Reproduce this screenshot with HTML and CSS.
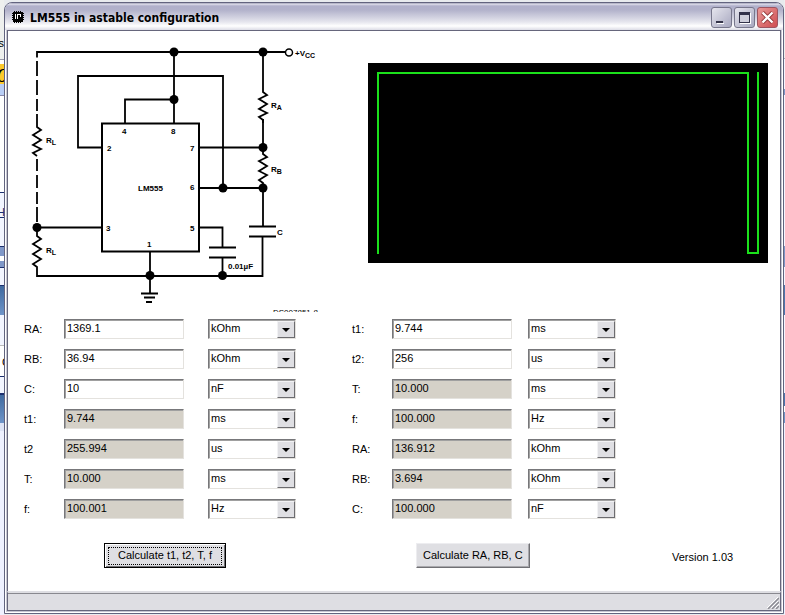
FILE: index.html
```
<!DOCTYPE html>
<html lang="en">
<head>
<meta charset="utf-8">
<title>LM555 in astable configuration</title>
<link rel="stylesheet" href="styles.css">
</head>
<body>
<div class="edge edge-left" aria-hidden="true"><span class="edge-ks">ks</span><span class="edge-logo">O</span><span class="edge-h">H</span><span class="edge-c">C</span></div>
<section class="window">
  <header class="titlebar">
    <svg class="app-icon" width="12" height="12" viewBox="0 0 12 12" shape-rendering="crispEdges" aria-hidden="true">
      <path d="M1 1h10v10H1z"/><path d="M0 2h1v1H0zM0 4h1v1H0zM0 6h1v1H0zM0 8h1v1H0zM11 2h1v1h-1zM11 4h1v1h-1zM11 6h1v1h-1zM11 8h1v1h-1zM2 0h1v1H2zM4 0h1v1H4zM6 0h1v1H6zM8 0h1v1H8zM2 11h1v1H2zM4 11h1v1H4zM6 11h1v1H6zM8 11h1v1H8z"/>
      <path d="M3 3h1v5H3zM5 3h4v1H5zM5 4h1v4H5zM8 4h1v2H8z" fill="#fff"/>
    </svg>
    <h1 class="title">LM555 in astable configuration</h1>
    <div class="controls">
      <button class="ctl" type="button" aria-label="Minimize"><svg width="19" height="19" viewBox="0 0 19 19"><path d="M4 13h7v2H4z" fill="#333348"/><path d="M5 15h7v1H5z" fill="#fff"/></svg></button>
      <button class="ctl" type="button" aria-label="Maximize"><svg width="19" height="19" viewBox="0 0 19 19" shape-rendering="crispEdges"><path d="M5 5h11v11H5z" fill="#fff"/><path d="M4 4h11v11H4z" fill="#33334a"/><path d="M5 7h9v7H5z" fill="#d0d0dc"/></svg></button>
      <button class="ctl ctl-close" type="button" aria-label="Close"><svg width="19" height="19" viewBox="0 0 19 19"><path d="M4.500 4.500l10 10M14.500 4.500l-10 10" stroke="#8e3434" stroke-width="4"/><path d="M4.500 4.500l10 10M14.500 4.500l-10 10" stroke="#fff" stroke-width="2.400"/></svg></button>
    </div>
  </header>
  <main class="client">
    <div class="figures">
      <svg class="circuit" width="296" height="273" viewBox="24 39 296 273" role="img" aria-label="LM555 astable circuit">
        <g class="wire">
          <path d="M37 57.500V52H285M174 52v71M125 123V99.500h49M102 147.500H78V76h145v112M199 147.500h64M199 188h64M37 227.500h65M37 270v6h225.500v-40M263 52v38M263 119v32M263 188v38M199 227.500h23.500V247M222.500 258v18"/>
          <path d="M37 61v15M37 80v15M37 99v12M37 114v10M37 159v12M37 175v13M37 192v12M37 207v15M37 227v6"/>
          <path d="M37 124v3l4 3-8 5 8 5-8 5 8 4-8 4 4 3"/>
          <path d="M37 233v3l4 3-8 5 8 5-8 5 8 5-8 5 4 3v3"/>
          <path d="M263 90v2l4 3-8 4 8 5-8 5 8 4-8 4 4 3v3"/>
          <path d="M263 150v4l4 3-8 4 8 5-8 5 8 4-8 5 4 3v5"/>
          <path d="M249 226.500h27M249 236.500h27M209 247.500h27M209 257.500h27"/>
          <path d="M150 251v42M141 293.500h17M144 297.500h11M146 302h6"/>
          <path class="chip" d="M102 123.500h97V251.500h-97z"/>
        </g>
        <g><circle cx="174" cy="52" r="4.500"/><circle cx="174" cy="99.500" r="4.500"/><circle cx="263" cy="52" r="4.500"/><circle cx="263" cy="147.500" r="4.500"/><circle cx="263" cy="188" r="4.500"/><circle cx="223" cy="188" r="4.500"/><circle cx="37" cy="227.500" r="4.500"/><circle cx="150" cy="275.500" r="4.500"/><circle cx="222.500" cy="275.500" r="4.500"/></g>
        <circle class="terminal" cx="289" cy="52.500" r="3.500"/>
        <g class="legend">
          <text x="295" y="56">+V<tspan class="sub" dy="2">CC</tspan></text>
          <text x="271" y="108">R<tspan class="sub" dy="2">A</tspan></text>
          <text x="271" y="172">R<tspan class="sub" dy="2">B</tspan></text>
          <text x="46" y="143">R<tspan class="sub" dy="2">L</tspan></text>
          <text x="46" y="253">R<tspan class="sub" dy="2">L</tspan></text>
          <text x="277" y="235">C</text><text x="228" y="269">0.01µF</text>
          <text x="138" y="191">LM555</text>
          <text x="122" y="134">4</text><text x="171" y="134">8</text><text x="107" y="151">2</text><text x="190" y="151">7</text><text x="190" y="190">6</text><text x="190" y="231">5</text><text x="106" y="231">3</text><text x="147" y="247">1</text>
          <text class="part" x="273" y="315">DS007851-8</text>
        </g>
      </svg>
      <svg class="scope" width="400" height="200" viewBox="0 0 400 200" role="img" aria-label="Output waveform"><path d="M10 191V10H380V190H390V9" fill="none" stroke="#1be01b" stroke-width="2" shape-rendering="crispEdges"/></svg>
    </div>
    <form class="forms">
      <div class="panel">
        <div class="row"><label for="a1">RA:</label><input id="a1" value="1369.1"><span class="pick"><select aria-label="RA unit"><option>kOhm</option></select></span></div>
        <div class="row"><label for="a2">RB:</label><input id="a2" value="36.94"><span class="pick"><select aria-label="RB unit"><option>kOhm</option></select></span></div>
        <div class="row"><label for="a3">C:</label><input id="a3" value="10"><span class="pick"><select aria-label="C unit"><option>nF</option></select></span></div>
        <div class="row"><label for="a4">t1:</label><input id="a4" value="9.744" readonly><span class="pick"><select aria-label="t1 unit"><option>ms</option></select></span></div>
        <div class="row"><label for="a5">t2</label><input id="a5" value="255.994" readonly><span class="pick"><select aria-label="t2 unit"><option>us</option></select></span></div>
        <div class="row"><label for="a6">T:</label><input id="a6" value="10.000" readonly><span class="pick"><select aria-label="T unit"><option>ms</option></select></span></div>
        <div class="row"><label for="a7">f:</label><input id="a7" value="100.001" readonly><span class="pick"><select aria-label="f unit"><option>Hz</option></select></span></div>
        <div class="action action-main"><button class="btn btn-default" type="button"><span>Calculate t1, t2, T, f</span></button></div>
      </div>
      <div class="panel panel-right">
        <div class="row"><label for="b1">t1:</label><input id="b1" value="9.744"><span class="pick"><select aria-label="t1 unit"><option>ms</option></select></span></div>
        <div class="row"><label for="b2">t2:</label><input id="b2" value="256"><span class="pick"><select aria-label="t2 unit"><option>us</option></select></span></div>
        <div class="row"><label for="b3">T:</label><input id="b3" value="10.000" readonly><span class="pick"><select aria-label="T unit"><option>ms</option></select></span></div>
        <div class="row"><label for="b4">f:</label><input id="b4" value="100.000" readonly><span class="pick"><select aria-label="f unit"><option>Hz</option></select></span></div>
        <div class="row"><label for="b5">RA:</label><input id="b5" value="136.912" readonly><span class="pick"><select aria-label="RA unit"><option>kOhm</option></select></span></div>
        <div class="row"><label for="b6">RB:</label><input id="b6" value="3.694" readonly><span class="pick"><select aria-label="RB unit"><option>kOhm</option></select></span></div>
        <div class="row"><label for="b7">C:</label><input id="b7" value="100.000" readonly><span class="pick"><select aria-label="C unit"><option>nF</option></select></span></div>
        <div class="action"><button class="btn" type="button"><span>Calculate RA, RB, C</span></button></div>
      </div>
      <p class="version">Version 1.03</p>
    </form>
  </main>
  <footer class="status"><svg width="12" height="12" viewBox="0 0 12 12" aria-hidden="true"><path d="M1 12L12 1M5 12l7-7M9 12l3-3" stroke="#8c8c94" stroke-width="1.500"/><path d="M0 11L11 0M4 11l7-7M8 11l4-4" stroke="#fff"/></svg></footer>
</section>
<div class="edge edge-right" aria-hidden="true"></div>
</body>
</html>
```
FILE: styles.css
```
* { box-sizing: border-box; }

body {
  margin: 0;
  min-height: 100vh;
  display: grid;
  grid-template-columns: 4px minmax(0, 1fr) 1px;
  padding: 2px 0 1px;
  background: #e8ebee;
  color: #000;
  font: 11px/13px "Liberation Sans", Arial, sans-serif;
}

.edge {
  margin: -2px 0 -1px;
  position: relative;
  overflow: hidden;
  background: linear-gradient(#eef0ee 59px, #99a 59px 60px, #fff 60px 64px, #fdc92b 64px 84px, #b8cdf5 84px 95px, #88a 95px 96px, #fff 96px 192px, #1c2f6e 192px 193px, #f2f5ff 193px 217px, #1c2f6e 217px 218px, #f2f5ff 218px 246px, #1c2f6e 246px 247px, #7f97c8 247px 256px, #fff 256px 261px, #7f97c8 261px 267px, #1c2f6e 267px 268px, #f2f5ff 268px 285px, #1c2f6e 285px 286px, #3f699f 286px, #6f94c8 315px, #f2f5ff 315px 345px, #bbb 345px 346px, #fff 346px 376px, #1c2f6e 376px 377px, #f2f5ff 377px 393px, #1c2f6e 393px 395px, #3f699f 395px, #6f94c8 423px, #dde3f5 423px 431px, #eef1ff 431px);
}
.edge-right { background: linear-gradient(#eef0ee 58px, #aab 58px 59px, #f5f5ff 59px 89px, #7f97c8 89px 95px, #f5f5ff 95px 246px, #7f97c8 246px 267px, #f5f5ff 267px 285px, #4d77b0 285px 315px, #f5f5ff 315px 393px, #4d77b0 393px 406px, #fff 406px 412px, #6f94c8 412px 423px, #eef1ff 423px); }
.edge span { position: absolute; right: 0; }
.edge .edge-ks { top: 37px; }
.edge .edge-logo { top: 67px; right: -5px; font: italic bold 18px/18px "Liberation Serif", serif; }
.edge .edge-h { top: 206px; right: -1px; color: #1c2f6e; }
.edge .edge-c { top: 356px; right: -6px; }

.window {
  display: flex;
  flex-direction: column;
  padding: 0 2px 2px;
  border: 1px solid #62647f;
  border-radius: 8px 8px 0 0;
  background: #fff;
  box-shadow: inset 0 0 0 1px #fff, inset 0 0 0 2px #c6c6d2;
}

.titlebar {
  display: flex;
  align-items: center;
  height: 27px;
  margin: 0 -2px;
  padding: 0 5px 0 7px;
  border-radius: 7px 7px 0 0;
  background: linear-gradient(#8f90a8 0, #e0e0ec 1px, #b0b0cb 3px, #b2b2cb 7px, #d0d0df 14px, #e6e6ee 19px, #fff 23px, #dcdce6 27px);
}
.app-icon { flex: none; margin-right: 6px; }
.title { flex: 1; margin: 0; padding-top: 3px; font: bold 12px/16px "DejaVu Sans Condensed", "Open Sans", sans-serif; white-space: nowrap; }
.controls { display: flex; gap: 2px; margin-top: 2px; }
.ctl {
  width: 21px;
  height: 21px;
  padding: 0;
  border: 1px solid #77778c;
  border-radius: 3px;
  background: linear-gradient(135deg, #e6e6ee, #a8a8c0);
}
.ctl svg { display: block; }
.ctl-close { border-color: #9d5560; background: linear-gradient(135deg, #e99a97, #cf4c50); }

.client {
  flex: 1;
  padding: 8px 11px 0 16px;
  border: 1px solid #66667c;
  border-bottom: 0;
  background: #fff;
}
.figures { display: flex; justify-content: space-between; align-items: flex-start; }
.circuit, .scope { display: block; flex: none; }
.scope { margin: 24px 1px 0 0; background: #000; }
.wire path { fill: none; stroke: #000; stroke-width: 1.800; }
.wire .chip { stroke-width: 2; }
.terminal { fill: #fff; stroke: #000; stroke-width: 1.500; }
.legend { font: bold 8px "Liberation Sans", Arial, sans-serif; }
.legend .sub { font-size: 7px; }
.legend .part { font-weight: normal; }

.forms { display: flex; margin-top: 7px; }
.panel { display: flex; flex-direction: column; gap: 10px; margin-right: 56px; }
.row { display: grid; grid-template-columns: 40px 120px 24px 88px; height: 20px; }
.panel-right .row { grid-template-columns: 40px 120px 16px 88px; }
.row label { padding-top: 4px; }
.row input, .row select {
  width: 100%;
  height: 20px;
  margin: 0;
  border: 1px solid;
  border-color: #77777a #e4e2de #e4e2de #77777a;
  border-radius: 0;
  background: #fff;
  box-shadow: inset 1px 1px 0 #a0a0a0;
  color: #000;
  font: inherit;
}
.row input { padding: 0 2px 2px; }
.row input:read-only { background: #d5d1c8; }
.row select { appearance: none; padding: 0 18px 1px 2px; }
.pick { grid-column: 4; position: relative; display: block; }
.pick::before {
  content: "";
  position: absolute;
  inset: 2px 1px 1px auto;
  width: 16px;
  border: 1px solid;
  border-color: #f2f2f4 #6c6c70 #6c6c70 #f2f2f4;
  background: #dfdfe3;
  pointer-events: none;
}
.pick::after {
  content: "";
  position: absolute;
  right: 6px;
  top: 9px;
  border: solid transparent;
  border-width: 4px 4px 0;
  border-top-color: #000;
  pointer-events: none;
}

.action { display: flex; padding: 14px 0 0 64px; }
.action-main { padding-left: 80px; }
.btn {
  height: 25px;
  padding: 2px 6px;
  border: 1px solid;
  border-color: #ededf0 #707074 #707074 #ededf0;
  border-radius: 0;
  background: #dfdfe3;
  box-shadow: inset -1px -1px 0 #a8a8ac;
  color: #000;
  font: inherit;
}
.btn-default { padding: 3px; border-color: #000; box-shadow: inset 1px 1px 0 #fff, inset -1px -1px 0 #707074; }
.btn-default span { display: block; padding: 1px 9px 2px; border: 1px dotted #000; }
.version { align-self: flex-end; margin: 0 0 4px; }

.status {
  display: flex;
  justify-content: flex-end;
  align-items: flex-end;
  height: 20px;
  padding: 0 1px 1px 0;
  border: 1px solid #66667c;
  border-top: 2px solid #dedee3;
  background: #dedee3;
  box-shadow: inset 0 1px 0 #88888f;
}
.status svg { display: block; }
```
